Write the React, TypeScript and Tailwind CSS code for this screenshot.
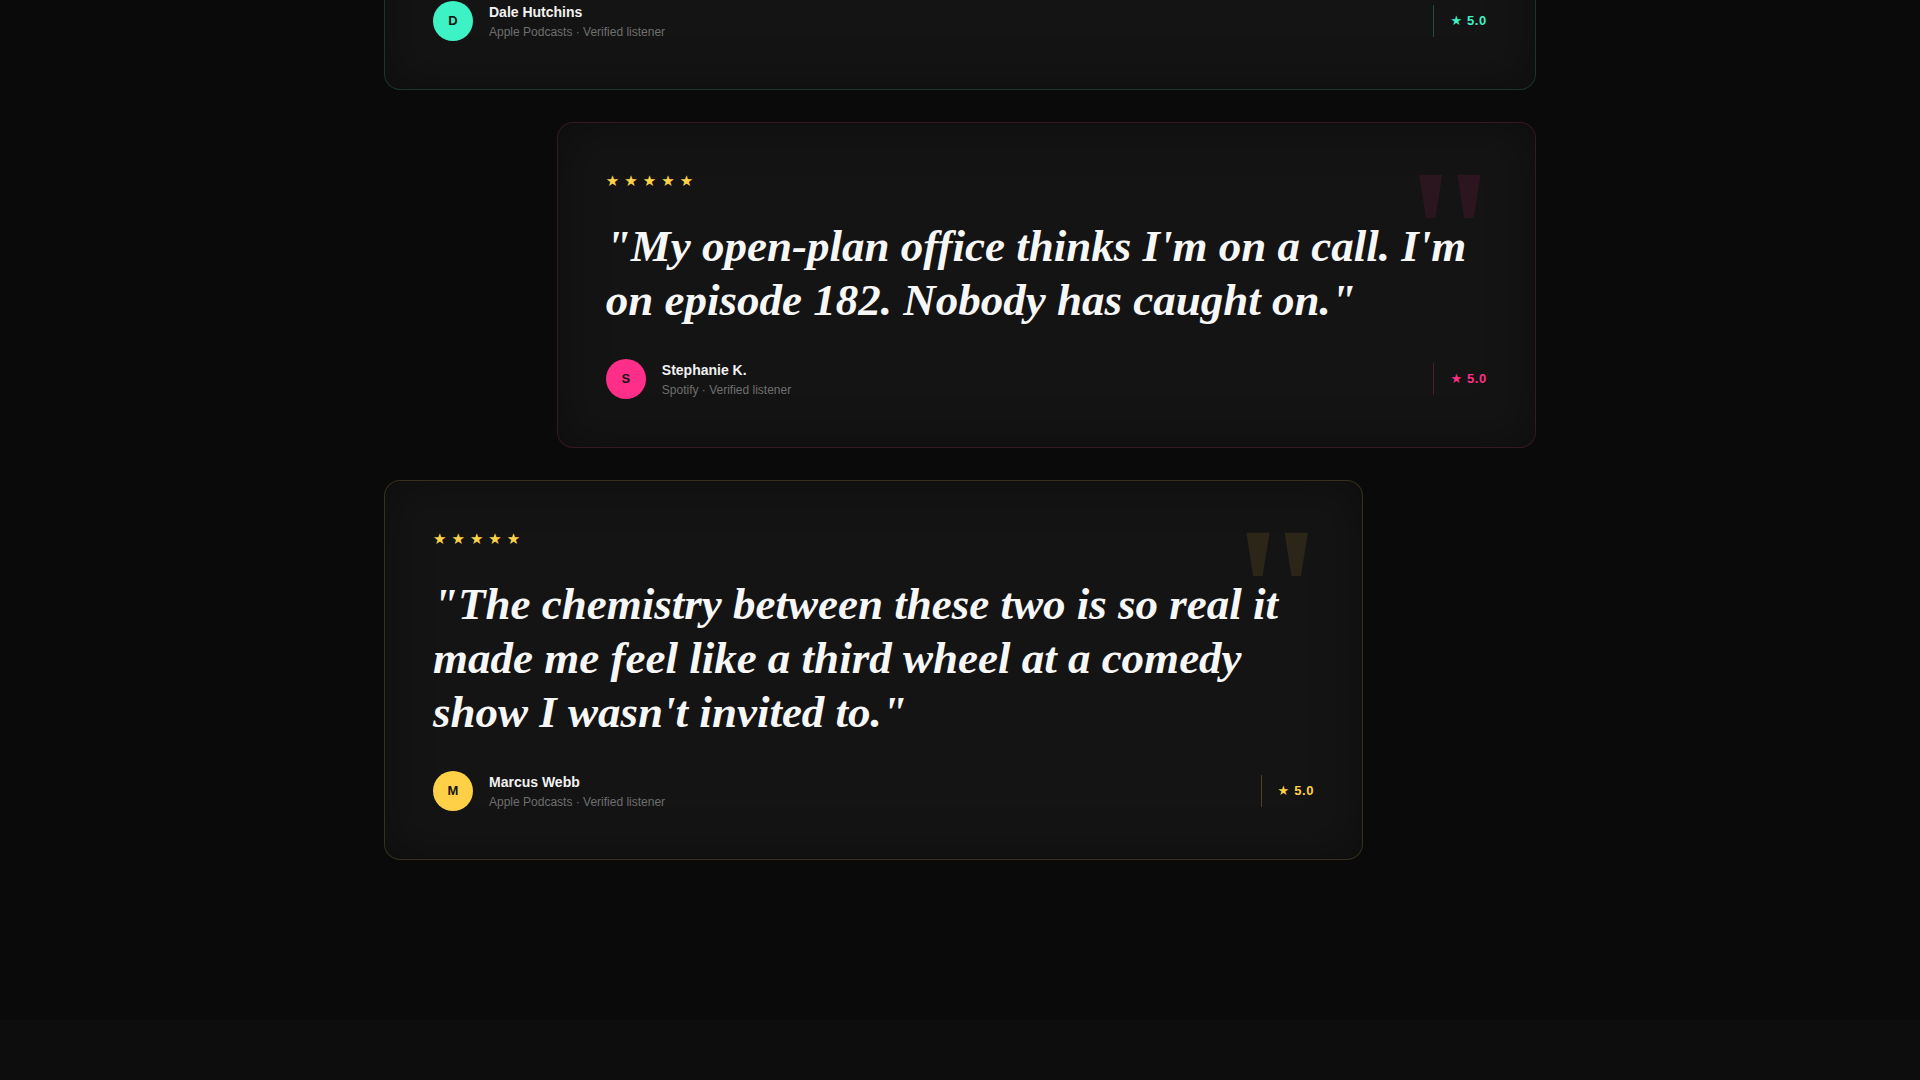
import React from "react";

type Review = {
  quote: string;
  name: string;
  initial: string;
  source: string;
  width: string;
  align: string;
  border: string;
  avatar: string;
  mark: string;
  rating: string;
  divider: string;
};

const reviews: Review[] = [
  {
    quote:
      "\"I laughed so hard on the treadmill that the gym staff came over to check on me.\"",
    name: "Dale Hutchins",
    initial: "D",
    source: "Apple Podcasts",
    width: "w-full",
    align: "self-start",
    border: "border-[#3df2c4]/15",
    avatar: "bg-[#3df2c4]",
    mark: "text-[#3df2c4]/10",
    rating: "text-[#3df2c4]",
    divider: "bg-[#3df2c4]/25",
  },
  {
    quote:
      "\"My open-plan office thinks I'm on a call. I'm on episode 182. Nobody has caught on.\"",
    name: "Stephanie K.",
    initial: "S",
    source: "Spotify",
    width: "w-[85%]",
    align: "self-end",
    border: "border-[#ff2e88]/15",
    avatar: "bg-[#ff2e88]",
    mark: "text-[#ff2e88]/10",
    rating: "text-[#ff2e88]",
    divider: "bg-[#ff2e88]/25",
  },
  {
    quote:
      "\"The chemistry between these two is so real it made me feel like a third wheel at a comedy show I wasn't invited to.\"",
    name: "Marcus Webb",
    initial: "M",
    source: "Apple Podcasts",
    width: "w-[85%]",
    align: "self-start",
    border: "border-[#fdd047]/15",
    avatar: "bg-[#fdd047]",
    mark: "text-[#fdd047]/10",
    rating: "text-[#fdd047]",
    divider: "bg-[#fdd047]/25",
  },
];

function Stars() {
  return (
    <div className="flex h-5 items-center gap-[5px] text-[15px] leading-none text-[#fcd24a] [font-family:'DejaVu_Sans',sans-serif]">
      {[0, 1, 2, 3, 4].map((i) => (
        <span key={i}>★</span>
      ))}
    </div>
  );
}

function ReviewCard({ r }: { r: Review }) {
  return (
    <article
      className={`relative ${r.width} ${r.align} overflow-hidden rounded-2xl border ${r.border} bg-[#141414] p-12 shadow-[inset_0_0_48px_rgba(0,0,0,0.35)]`}
    >
      <span
        aria-hidden
        className={`pointer-events-none absolute right-[34px] top-[19px] select-none text-[184px] font-bold leading-none ${r.mark} [font-family:'Liberation_Serif',serif]`}
      >
        "
      </span>
      <div className="relative">
        <Stars />
        <p className="mt-7 text-[45px] font-bold italic leading-[1.2] text-[#f7f7f7] [font-family:'Liberation_Serif',serif]">
          {r.quote}
        </p>
        <div className="mt-8 flex items-center justify-between">
          <div className="flex items-center gap-4">
            <div
              className={`flex h-10 w-10 items-center justify-center rounded-full ${r.avatar} text-[13px] font-bold text-[#141414]`}
            >
              {r.initial}
            </div>
            <div>
              <div className="text-[14px] font-bold leading-5 text-[#f2f2f2]">{r.name}</div>
              <div className="mt-0.5 text-[12px] leading-4 text-[#6e6e6e]">
                {r.source} · Verified listener
              </div>
            </div>
          </div>
          <div className="flex items-center gap-4">
            <div className={`h-8 w-px ${r.divider}`} />
            <div className={`text-[13px] font-bold tracking-wider ${r.rating}`}>
              <span className="[font-family:'DejaVu_Sans',sans-serif]">★</span> 5.0
            </div>
          </div>
        </div>
      </div>
    </article>
  );
}

export default function App() {
  return (
    <div className="h-[1080px] overflow-hidden bg-[#0d0d0d] [font-family:'Liberation_Sans',Arial,sans-serif]">
      <section className="bg-[#0a0a0a] pb-[160px]">
        <div className="mx-auto -mt-[236px] flex max-w-6xl flex-col gap-8">
          {reviews.map((r) => (
            <ReviewCard key={r.name} r={r} />
          ))}
        </div>
      </section>
    </div>
  );
}
